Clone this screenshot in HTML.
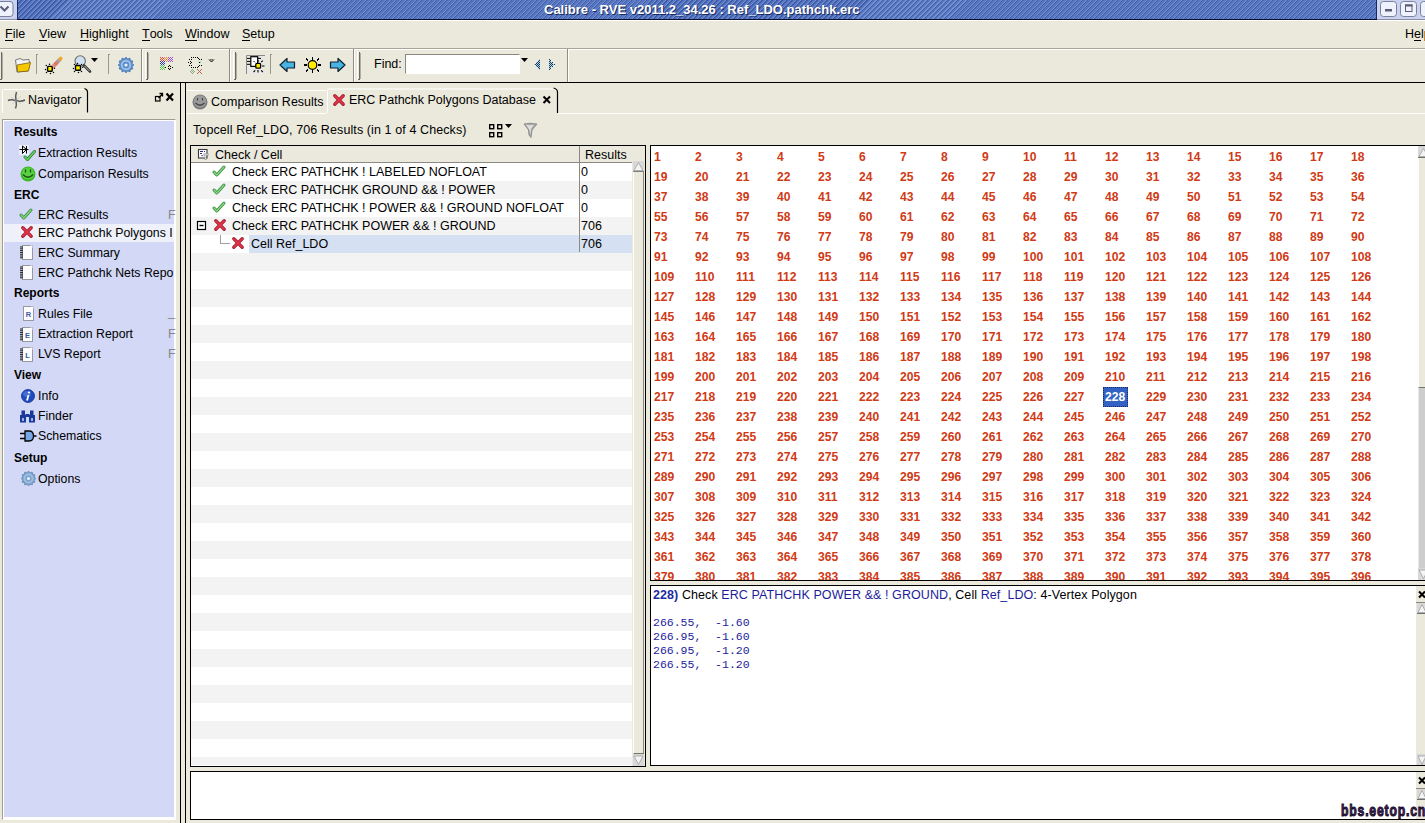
<!DOCTYPE html>
<html><head><meta charset="utf-8"><style>
*{margin:0;padding:0;box-sizing:border-box}
body{width:1425px;height:823px;overflow:hidden;position:relative;background:#ebe9dc;font-family:"Liberation Sans",sans-serif;font-size:12px;color:#000}
.a{position:absolute}
.t{position:absolute;white-space:nowrap;line-height:14px}
u{text-decoration:none;border-bottom:1px solid #000;display:inline-block;line-height:12px}
svg{position:absolute;overflow:visible}
.g{position:absolute;font-weight:bold;color:#d03a14;font-size:12.5px;line-height:14px;white-space:nowrap;transform:scaleX(0.97);transform-origin:0 0}
.nv{position:absolute;white-space:nowrap;line-height:14px;font-size:12.3px}
.hd{position:absolute;white-space:nowrap;line-height:14px;font-size:12px;font-weight:bold}
.mono{position:absolute;white-space:pre;font-family:"Liberation Mono",monospace;font-size:11.5px;line-height:14px;color:#1c1c9c}
</style></head><body>
<div class="a" style="left:0px;top:0px;width:1425px;height:19px;background:repeating-linear-gradient(-45deg,#3f5ca8 0px,#3f5ca8 0.9px,#7390d2 0.9px,#7390d2 1.7px,#5876bf 1.7px,#5876bf 3.54px)"></div>
<div class="a" style="left:0px;top:0px;width:17px;height:19px;background:#c9d3f1"></div>
<div class="a" style="left:1377px;top:0px;width:48px;height:19px;background:#c9d3f1"></div>
<div class="a" style="left:0px;top:19px;width:1425px;height:1px;background:#0a0f2a"></div>
<div class="a" style="left:0px;top:20px;width:1425px;height:1px;background:#fff"></div>
<div class="t" style="left:544px;top:3px;color:#fff;font-weight:bold;font-size:13px;text-shadow:1px 1px 0 #1a2a60">Calibre - RVE v2011.2_34.26 : Ref_LDO.pathchk.erc</div>
<div class="t" style="left:5px;top:27px;font-size:12.5px"><u>F</u>ile</div>
<div class="t" style="left:39px;top:27px;font-size:12.5px"><u>V</u>iew</div>
<div class="t" style="left:80px;top:27px;font-size:12.5px"><u>H</u>ighlight</div>
<div class="t" style="left:142px;top:27px;font-size:12.5px"><u>T</u>ools</div>
<div class="t" style="left:185px;top:27px;font-size:12.5px"><u>W</u>indow</div>
<div class="t" style="left:242px;top:27px;font-size:12.5px"><u>S</u>etup</div>
<div class="t" style="left:1405px;top:27px;font-size:12.5px">H<u>e</u>lp</div>
<div class="a" style="left:0px;top:48px;width:1425px;height:1px;background:#a8a596"></div>
<div class="a" style="left:0px;top:49px;width:1425px;height:1px;background:#fff"></div>
<div class="a" style="left:0px;top:82px;width:1425px;height:1px;background:#000"></div>
<div class="a" style="left:180px;top:83px;width:1px;height:740px;background:#000"></div>
<div class="a" style="left:2px;top:119px;width:174px;height:701px;background:#fff;border:1px solid #a09d90;border-right-color:#fff;border-bottom-color:#fff"></div>
<div class="a" style="left:4px;top:121px;width:170px;height:696px;background:#d2d8f5"></div>
<div class="a" style="left:185px;top:83px;width:1px;height:740px;background:#000"></div>
<div class="a" style="left:190px;top:145px;width:456px;height:622px;background:#fff;border:1px solid #000"></div>
<div class="a" style="left:650px;top:145px;width:775px;height:436px;background:#fff;border:1px solid #000;border-right:none"></div>
<div class="a" style="left:650px;top:585px;width:775px;height:181px;background:#fff;border:1px solid #000;border-right:none"></div>
<div class="a" style="left:190px;top:771px;width:1235px;height:49px;background:#fff;border:1px solid #000;border-right:none"></div>
<svg style="left:0px;top:86px;" width="92" height="28" viewBox="0 0 92 28"><path d="M2.5 27 V4.5 Q2.5 3.5 3.5 3.5 H84" fill="none" stroke="#fff"/><path d="M84.5 2.5 Q87.5 3.5 87.5 6 V26.5" fill="none" stroke="#000" stroke-width="1.2"/></svg>
<div class="t" style="left:28px;top:93px;font-size:12.5px">Navigator</div>
<div class="a" style="left:4px;top:224px;width:170px;height:18px;background:#eef0fa"></div>
<div class="hd" style="left:14px;top:125px;">Results</div>
<div class="nv" style="left:38px;top:146px;">Extraction Results</div>
<div class="nv" style="left:38px;top:167px;">Comparison Results</div>
<div class="hd" style="left:14px;top:188px;">ERC</div>
<div class="nv" style="left:38px;top:208px;">ERC Results</div>
<div class="nv" style="left:38px;top:226px;">ERC Pathchk Polygons I</div>
<div class="nv" style="left:38px;top:246px;">ERC Summary</div>
<div class="nv" style="left:38px;top:266px;">ERC Pathchk Nets Repo</div>
<div class="hd" style="left:14px;top:286px;">Reports</div>
<div class="nv" style="left:38px;top:307px;">Rules File</div>
<div class="nv" style="left:38px;top:327px;">Extraction Report</div>
<div class="nv" style="left:38px;top:347px;">LVS Report</div>
<div class="hd" style="left:14px;top:368px;">View</div>
<div class="nv" style="left:38px;top:389px;">Info</div>
<div class="nv" style="left:38px;top:409px;">Finder</div>
<div class="nv" style="left:38px;top:429px;">Schematics</div>
<div class="hd" style="left:14px;top:451px;">Setup</div>
<div class="nv" style="left:38px;top:472px;">Options</div>
<div class="t" style="left:193px;top:123px;font-size:12.5px;letter-spacing:0.1px">Topcell Ref_LDO, 706 Results (in 1 of 4 Checks)</div>
<div class="a" style="left:191px;top:181px;width:441px;height:18px;background:#f3f3f3"></div>
<div class="a" style="left:191px;top:217px;width:441px;height:18px;background:#f3f3f3"></div>
<div class="a" style="left:191px;top:253px;width:441px;height:18px;background:#f3f3f3"></div>
<div class="a" style="left:191px;top:289px;width:441px;height:18px;background:#f3f3f3"></div>
<div class="a" style="left:191px;top:325px;width:441px;height:18px;background:#f3f3f3"></div>
<div class="a" style="left:191px;top:361px;width:441px;height:18px;background:#f3f3f3"></div>
<div class="a" style="left:191px;top:397px;width:441px;height:18px;background:#f3f3f3"></div>
<div class="a" style="left:191px;top:433px;width:441px;height:18px;background:#f3f3f3"></div>
<div class="a" style="left:191px;top:469px;width:441px;height:18px;background:#f3f3f3"></div>
<div class="a" style="left:191px;top:505px;width:441px;height:18px;background:#f3f3f3"></div>
<div class="a" style="left:191px;top:541px;width:441px;height:18px;background:#f3f3f3"></div>
<div class="a" style="left:191px;top:577px;width:441px;height:18px;background:#f3f3f3"></div>
<div class="a" style="left:191px;top:613px;width:441px;height:18px;background:#f3f3f3"></div>
<div class="a" style="left:191px;top:649px;width:441px;height:18px;background:#f3f3f3"></div>
<div class="a" style="left:191px;top:685px;width:441px;height:18px;background:#f3f3f3"></div>
<div class="a" style="left:191px;top:721px;width:441px;height:18px;background:#f3f3f3"></div>
<div class="a" style="left:191px;top:757px;width:441px;height:8px;background:#f3f3f3"></div>
<div class="a" style="left:249px;top:235px;width:330px;height:18px;background:#d5e0f2"></div>
<div class="a" style="left:579px;top:235px;width:53px;height:18px;background:#d5e0f2"></div>
<div class="a" style="left:191px;top:146px;width:441px;height:16px;background:#ebe8dd"></div>
<div class="a" style="left:191px;top:162px;width:441px;height:1px;background:#8c8a80"></div>
<div class="a" style="left:579px;top:146px;width:1px;height:106px;background:#8c8a80"></div>
<div class="a" style="left:632px;top:146px;width:13px;height:620px;background:#e9e6da"></div>
<div class="t" style="left:215px;top:148px;font-size:12.5px">Check / Cell</div>
<div class="t" style="left:585px;top:148px;font-size:12.5px">Results</div>
<div class="t" style="left:232px;top:165px;font-size:12.5px">Check ERC PATHCHK ! LABELED NOFLOAT</div>
<div class="t" style="left:581px;top:165px;font-size:12.5px">0</div>
<div class="t" style="left:232px;top:183px;font-size:12.5px">Check ERC PATHCHK GROUND &amp;&amp; ! POWER</div>
<div class="t" style="left:581px;top:183px;font-size:12.5px">0</div>
<div class="t" style="left:232px;top:201px;font-size:12.5px">Check ERC PATHCHK ! POWER &amp;&amp; ! GROUND NOFLOAT</div>
<div class="t" style="left:581px;top:201px;font-size:12.5px">0</div>
<div class="t" style="left:232px;top:219px;font-size:12.5px">Check ERC PATHCHK POWER &amp;&amp; ! GROUND</div>
<div class="t" style="left:581px;top:219px;font-size:12.5px">706</div>
<div class="t" style="left:251px;top:237px;font-size:12.5px">Cell Ref_LDO</div>
<div class="t" style="left:581px;top:237px;font-size:12.5px">706</div>
<div class="a" style="left:651px;top:146px;width:767px;height:434px;overflow:hidden">
<div class="a" style="left:452px;top:241px;width:25px;height:20px;background:#3262c4;outline:1px dotted #1a2a60;outline-offset:-1px"></div>
<div class="g" style="left:3px;top:4px">1</div><div class="g" style="left:44px;top:4px">2</div><div class="g" style="left:85px;top:4px">3</div><div class="g" style="left:126px;top:4px">4</div><div class="g" style="left:167px;top:4px">5</div><div class="g" style="left:208px;top:4px">6</div><div class="g" style="left:249px;top:4px">7</div><div class="g" style="left:290px;top:4px">8</div><div class="g" style="left:331px;top:4px">9</div><div class="g" style="left:372px;top:4px">10</div><div class="g" style="left:413px;top:4px">11</div><div class="g" style="left:454px;top:4px">12</div><div class="g" style="left:495px;top:4px">13</div><div class="g" style="left:536px;top:4px">14</div><div class="g" style="left:577px;top:4px">15</div><div class="g" style="left:618px;top:4px">16</div><div class="g" style="left:659px;top:4px">17</div><div class="g" style="left:700px;top:4px">18</div>
<div class="g" style="left:3px;top:24px">19</div><div class="g" style="left:44px;top:24px">20</div><div class="g" style="left:85px;top:24px">21</div><div class="g" style="left:126px;top:24px">22</div><div class="g" style="left:167px;top:24px">23</div><div class="g" style="left:208px;top:24px">24</div><div class="g" style="left:249px;top:24px">25</div><div class="g" style="left:290px;top:24px">26</div><div class="g" style="left:331px;top:24px">27</div><div class="g" style="left:372px;top:24px">28</div><div class="g" style="left:413px;top:24px">29</div><div class="g" style="left:454px;top:24px">30</div><div class="g" style="left:495px;top:24px">31</div><div class="g" style="left:536px;top:24px">32</div><div class="g" style="left:577px;top:24px">33</div><div class="g" style="left:618px;top:24px">34</div><div class="g" style="left:659px;top:24px">35</div><div class="g" style="left:700px;top:24px">36</div>
<div class="g" style="left:3px;top:44px">37</div><div class="g" style="left:44px;top:44px">38</div><div class="g" style="left:85px;top:44px">39</div><div class="g" style="left:126px;top:44px">40</div><div class="g" style="left:167px;top:44px">41</div><div class="g" style="left:208px;top:44px">42</div><div class="g" style="left:249px;top:44px">43</div><div class="g" style="left:290px;top:44px">44</div><div class="g" style="left:331px;top:44px">45</div><div class="g" style="left:372px;top:44px">46</div><div class="g" style="left:413px;top:44px">47</div><div class="g" style="left:454px;top:44px">48</div><div class="g" style="left:495px;top:44px">49</div><div class="g" style="left:536px;top:44px">50</div><div class="g" style="left:577px;top:44px">51</div><div class="g" style="left:618px;top:44px">52</div><div class="g" style="left:659px;top:44px">53</div><div class="g" style="left:700px;top:44px">54</div>
<div class="g" style="left:3px;top:64px">55</div><div class="g" style="left:44px;top:64px">56</div><div class="g" style="left:85px;top:64px">57</div><div class="g" style="left:126px;top:64px">58</div><div class="g" style="left:167px;top:64px">59</div><div class="g" style="left:208px;top:64px">60</div><div class="g" style="left:249px;top:64px">61</div><div class="g" style="left:290px;top:64px">62</div><div class="g" style="left:331px;top:64px">63</div><div class="g" style="left:372px;top:64px">64</div><div class="g" style="left:413px;top:64px">65</div><div class="g" style="left:454px;top:64px">66</div><div class="g" style="left:495px;top:64px">67</div><div class="g" style="left:536px;top:64px">68</div><div class="g" style="left:577px;top:64px">69</div><div class="g" style="left:618px;top:64px">70</div><div class="g" style="left:659px;top:64px">71</div><div class="g" style="left:700px;top:64px">72</div>
<div class="g" style="left:3px;top:84px">73</div><div class="g" style="left:44px;top:84px">74</div><div class="g" style="left:85px;top:84px">75</div><div class="g" style="left:126px;top:84px">76</div><div class="g" style="left:167px;top:84px">77</div><div class="g" style="left:208px;top:84px">78</div><div class="g" style="left:249px;top:84px">79</div><div class="g" style="left:290px;top:84px">80</div><div class="g" style="left:331px;top:84px">81</div><div class="g" style="left:372px;top:84px">82</div><div class="g" style="left:413px;top:84px">83</div><div class="g" style="left:454px;top:84px">84</div><div class="g" style="left:495px;top:84px">85</div><div class="g" style="left:536px;top:84px">86</div><div class="g" style="left:577px;top:84px">87</div><div class="g" style="left:618px;top:84px">88</div><div class="g" style="left:659px;top:84px">89</div><div class="g" style="left:700px;top:84px">90</div>
<div class="g" style="left:3px;top:104px">91</div><div class="g" style="left:44px;top:104px">92</div><div class="g" style="left:85px;top:104px">93</div><div class="g" style="left:126px;top:104px">94</div><div class="g" style="left:167px;top:104px">95</div><div class="g" style="left:208px;top:104px">96</div><div class="g" style="left:249px;top:104px">97</div><div class="g" style="left:290px;top:104px">98</div><div class="g" style="left:331px;top:104px">99</div><div class="g" style="left:372px;top:104px">100</div><div class="g" style="left:413px;top:104px">101</div><div class="g" style="left:454px;top:104px">102</div><div class="g" style="left:495px;top:104px">103</div><div class="g" style="left:536px;top:104px">104</div><div class="g" style="left:577px;top:104px">105</div><div class="g" style="left:618px;top:104px">106</div><div class="g" style="left:659px;top:104px">107</div><div class="g" style="left:700px;top:104px">108</div>
<div class="g" style="left:3px;top:124px">109</div><div class="g" style="left:44px;top:124px">110</div><div class="g" style="left:85px;top:124px">111</div><div class="g" style="left:126px;top:124px">112</div><div class="g" style="left:167px;top:124px">113</div><div class="g" style="left:208px;top:124px">114</div><div class="g" style="left:249px;top:124px">115</div><div class="g" style="left:290px;top:124px">116</div><div class="g" style="left:331px;top:124px">117</div><div class="g" style="left:372px;top:124px">118</div><div class="g" style="left:413px;top:124px">119</div><div class="g" style="left:454px;top:124px">120</div><div class="g" style="left:495px;top:124px">121</div><div class="g" style="left:536px;top:124px">122</div><div class="g" style="left:577px;top:124px">123</div><div class="g" style="left:618px;top:124px">124</div><div class="g" style="left:659px;top:124px">125</div><div class="g" style="left:700px;top:124px">126</div>
<div class="g" style="left:3px;top:144px">127</div><div class="g" style="left:44px;top:144px">128</div><div class="g" style="left:85px;top:144px">129</div><div class="g" style="left:126px;top:144px">130</div><div class="g" style="left:167px;top:144px">131</div><div class="g" style="left:208px;top:144px">132</div><div class="g" style="left:249px;top:144px">133</div><div class="g" style="left:290px;top:144px">134</div><div class="g" style="left:331px;top:144px">135</div><div class="g" style="left:372px;top:144px">136</div><div class="g" style="left:413px;top:144px">137</div><div class="g" style="left:454px;top:144px">138</div><div class="g" style="left:495px;top:144px">139</div><div class="g" style="left:536px;top:144px">140</div><div class="g" style="left:577px;top:144px">141</div><div class="g" style="left:618px;top:144px">142</div><div class="g" style="left:659px;top:144px">143</div><div class="g" style="left:700px;top:144px">144</div>
<div class="g" style="left:3px;top:164px">145</div><div class="g" style="left:44px;top:164px">146</div><div class="g" style="left:85px;top:164px">147</div><div class="g" style="left:126px;top:164px">148</div><div class="g" style="left:167px;top:164px">149</div><div class="g" style="left:208px;top:164px">150</div><div class="g" style="left:249px;top:164px">151</div><div class="g" style="left:290px;top:164px">152</div><div class="g" style="left:331px;top:164px">153</div><div class="g" style="left:372px;top:164px">154</div><div class="g" style="left:413px;top:164px">155</div><div class="g" style="left:454px;top:164px">156</div><div class="g" style="left:495px;top:164px">157</div><div class="g" style="left:536px;top:164px">158</div><div class="g" style="left:577px;top:164px">159</div><div class="g" style="left:618px;top:164px">160</div><div class="g" style="left:659px;top:164px">161</div><div class="g" style="left:700px;top:164px">162</div>
<div class="g" style="left:3px;top:184px">163</div><div class="g" style="left:44px;top:184px">164</div><div class="g" style="left:85px;top:184px">165</div><div class="g" style="left:126px;top:184px">166</div><div class="g" style="left:167px;top:184px">167</div><div class="g" style="left:208px;top:184px">168</div><div class="g" style="left:249px;top:184px">169</div><div class="g" style="left:290px;top:184px">170</div><div class="g" style="left:331px;top:184px">171</div><div class="g" style="left:372px;top:184px">172</div><div class="g" style="left:413px;top:184px">173</div><div class="g" style="left:454px;top:184px">174</div><div class="g" style="left:495px;top:184px">175</div><div class="g" style="left:536px;top:184px">176</div><div class="g" style="left:577px;top:184px">177</div><div class="g" style="left:618px;top:184px">178</div><div class="g" style="left:659px;top:184px">179</div><div class="g" style="left:700px;top:184px">180</div>
<div class="g" style="left:3px;top:204px">181</div><div class="g" style="left:44px;top:204px">182</div><div class="g" style="left:85px;top:204px">183</div><div class="g" style="left:126px;top:204px">184</div><div class="g" style="left:167px;top:204px">185</div><div class="g" style="left:208px;top:204px">186</div><div class="g" style="left:249px;top:204px">187</div><div class="g" style="left:290px;top:204px">188</div><div class="g" style="left:331px;top:204px">189</div><div class="g" style="left:372px;top:204px">190</div><div class="g" style="left:413px;top:204px">191</div><div class="g" style="left:454px;top:204px">192</div><div class="g" style="left:495px;top:204px">193</div><div class="g" style="left:536px;top:204px">194</div><div class="g" style="left:577px;top:204px">195</div><div class="g" style="left:618px;top:204px">196</div><div class="g" style="left:659px;top:204px">197</div><div class="g" style="left:700px;top:204px">198</div>
<div class="g" style="left:3px;top:224px">199</div><div class="g" style="left:44px;top:224px">200</div><div class="g" style="left:85px;top:224px">201</div><div class="g" style="left:126px;top:224px">202</div><div class="g" style="left:167px;top:224px">203</div><div class="g" style="left:208px;top:224px">204</div><div class="g" style="left:249px;top:224px">205</div><div class="g" style="left:290px;top:224px">206</div><div class="g" style="left:331px;top:224px">207</div><div class="g" style="left:372px;top:224px">208</div><div class="g" style="left:413px;top:224px">209</div><div class="g" style="left:454px;top:224px">210</div><div class="g" style="left:495px;top:224px">211</div><div class="g" style="left:536px;top:224px">212</div><div class="g" style="left:577px;top:224px">213</div><div class="g" style="left:618px;top:224px">214</div><div class="g" style="left:659px;top:224px">215</div><div class="g" style="left:700px;top:224px">216</div>
<div class="g" style="left:3px;top:244px">217</div><div class="g" style="left:44px;top:244px">218</div><div class="g" style="left:85px;top:244px">219</div><div class="g" style="left:126px;top:244px">220</div><div class="g" style="left:167px;top:244px">221</div><div class="g" style="left:208px;top:244px">222</div><div class="g" style="left:249px;top:244px">223</div><div class="g" style="left:290px;top:244px">224</div><div class="g" style="left:331px;top:244px">225</div><div class="g" style="left:372px;top:244px">226</div><div class="g" style="left:413px;top:244px">227</div><div class="g" style="left:454px;top:244px;color:#fff">228</div><div class="g" style="left:495px;top:244px">229</div><div class="g" style="left:536px;top:244px">230</div><div class="g" style="left:577px;top:244px">231</div><div class="g" style="left:618px;top:244px">232</div><div class="g" style="left:659px;top:244px">233</div><div class="g" style="left:700px;top:244px">234</div>
<div class="g" style="left:3px;top:264px">235</div><div class="g" style="left:44px;top:264px">236</div><div class="g" style="left:85px;top:264px">237</div><div class="g" style="left:126px;top:264px">238</div><div class="g" style="left:167px;top:264px">239</div><div class="g" style="left:208px;top:264px">240</div><div class="g" style="left:249px;top:264px">241</div><div class="g" style="left:290px;top:264px">242</div><div class="g" style="left:331px;top:264px">243</div><div class="g" style="left:372px;top:264px">244</div><div class="g" style="left:413px;top:264px">245</div><div class="g" style="left:454px;top:264px">246</div><div class="g" style="left:495px;top:264px">247</div><div class="g" style="left:536px;top:264px">248</div><div class="g" style="left:577px;top:264px">249</div><div class="g" style="left:618px;top:264px">250</div><div class="g" style="left:659px;top:264px">251</div><div class="g" style="left:700px;top:264px">252</div>
<div class="g" style="left:3px;top:284px">253</div><div class="g" style="left:44px;top:284px">254</div><div class="g" style="left:85px;top:284px">255</div><div class="g" style="left:126px;top:284px">256</div><div class="g" style="left:167px;top:284px">257</div><div class="g" style="left:208px;top:284px">258</div><div class="g" style="left:249px;top:284px">259</div><div class="g" style="left:290px;top:284px">260</div><div class="g" style="left:331px;top:284px">261</div><div class="g" style="left:372px;top:284px">262</div><div class="g" style="left:413px;top:284px">263</div><div class="g" style="left:454px;top:284px">264</div><div class="g" style="left:495px;top:284px">265</div><div class="g" style="left:536px;top:284px">266</div><div class="g" style="left:577px;top:284px">267</div><div class="g" style="left:618px;top:284px">268</div><div class="g" style="left:659px;top:284px">269</div><div class="g" style="left:700px;top:284px">270</div>
<div class="g" style="left:3px;top:304px">271</div><div class="g" style="left:44px;top:304px">272</div><div class="g" style="left:85px;top:304px">273</div><div class="g" style="left:126px;top:304px">274</div><div class="g" style="left:167px;top:304px">275</div><div class="g" style="left:208px;top:304px">276</div><div class="g" style="left:249px;top:304px">277</div><div class="g" style="left:290px;top:304px">278</div><div class="g" style="left:331px;top:304px">279</div><div class="g" style="left:372px;top:304px">280</div><div class="g" style="left:413px;top:304px">281</div><div class="g" style="left:454px;top:304px">282</div><div class="g" style="left:495px;top:304px">283</div><div class="g" style="left:536px;top:304px">284</div><div class="g" style="left:577px;top:304px">285</div><div class="g" style="left:618px;top:304px">286</div><div class="g" style="left:659px;top:304px">287</div><div class="g" style="left:700px;top:304px">288</div>
<div class="g" style="left:3px;top:324px">289</div><div class="g" style="left:44px;top:324px">290</div><div class="g" style="left:85px;top:324px">291</div><div class="g" style="left:126px;top:324px">292</div><div class="g" style="left:167px;top:324px">293</div><div class="g" style="left:208px;top:324px">294</div><div class="g" style="left:249px;top:324px">295</div><div class="g" style="left:290px;top:324px">296</div><div class="g" style="left:331px;top:324px">297</div><div class="g" style="left:372px;top:324px">298</div><div class="g" style="left:413px;top:324px">299</div><div class="g" style="left:454px;top:324px">300</div><div class="g" style="left:495px;top:324px">301</div><div class="g" style="left:536px;top:324px">302</div><div class="g" style="left:577px;top:324px">303</div><div class="g" style="left:618px;top:324px">304</div><div class="g" style="left:659px;top:324px">305</div><div class="g" style="left:700px;top:324px">306</div>
<div class="g" style="left:3px;top:344px">307</div><div class="g" style="left:44px;top:344px">308</div><div class="g" style="left:85px;top:344px">309</div><div class="g" style="left:126px;top:344px">310</div><div class="g" style="left:167px;top:344px">311</div><div class="g" style="left:208px;top:344px">312</div><div class="g" style="left:249px;top:344px">313</div><div class="g" style="left:290px;top:344px">314</div><div class="g" style="left:331px;top:344px">315</div><div class="g" style="left:372px;top:344px">316</div><div class="g" style="left:413px;top:344px">317</div><div class="g" style="left:454px;top:344px">318</div><div class="g" style="left:495px;top:344px">319</div><div class="g" style="left:536px;top:344px">320</div><div class="g" style="left:577px;top:344px">321</div><div class="g" style="left:618px;top:344px">322</div><div class="g" style="left:659px;top:344px">323</div><div class="g" style="left:700px;top:344px">324</div>
<div class="g" style="left:3px;top:364px">325</div><div class="g" style="left:44px;top:364px">326</div><div class="g" style="left:85px;top:364px">327</div><div class="g" style="left:126px;top:364px">328</div><div class="g" style="left:167px;top:364px">329</div><div class="g" style="left:208px;top:364px">330</div><div class="g" style="left:249px;top:364px">331</div><div class="g" style="left:290px;top:364px">332</div><div class="g" style="left:331px;top:364px">333</div><div class="g" style="left:372px;top:364px">334</div><div class="g" style="left:413px;top:364px">335</div><div class="g" style="left:454px;top:364px">336</div><div class="g" style="left:495px;top:364px">337</div><div class="g" style="left:536px;top:364px">338</div><div class="g" style="left:577px;top:364px">339</div><div class="g" style="left:618px;top:364px">340</div><div class="g" style="left:659px;top:364px">341</div><div class="g" style="left:700px;top:364px">342</div>
<div class="g" style="left:3px;top:384px">343</div><div class="g" style="left:44px;top:384px">344</div><div class="g" style="left:85px;top:384px">345</div><div class="g" style="left:126px;top:384px">346</div><div class="g" style="left:167px;top:384px">347</div><div class="g" style="left:208px;top:384px">348</div><div class="g" style="left:249px;top:384px">349</div><div class="g" style="left:290px;top:384px">350</div><div class="g" style="left:331px;top:384px">351</div><div class="g" style="left:372px;top:384px">352</div><div class="g" style="left:413px;top:384px">353</div><div class="g" style="left:454px;top:384px">354</div><div class="g" style="left:495px;top:384px">355</div><div class="g" style="left:536px;top:384px">356</div><div class="g" style="left:577px;top:384px">357</div><div class="g" style="left:618px;top:384px">358</div><div class="g" style="left:659px;top:384px">359</div><div class="g" style="left:700px;top:384px">360</div>
<div class="g" style="left:3px;top:404px">361</div><div class="g" style="left:44px;top:404px">362</div><div class="g" style="left:85px;top:404px">363</div><div class="g" style="left:126px;top:404px">364</div><div class="g" style="left:167px;top:404px">365</div><div class="g" style="left:208px;top:404px">366</div><div class="g" style="left:249px;top:404px">367</div><div class="g" style="left:290px;top:404px">368</div><div class="g" style="left:331px;top:404px">369</div><div class="g" style="left:372px;top:404px">370</div><div class="g" style="left:413px;top:404px">371</div><div class="g" style="left:454px;top:404px">372</div><div class="g" style="left:495px;top:404px">373</div><div class="g" style="left:536px;top:404px">374</div><div class="g" style="left:577px;top:404px">375</div><div class="g" style="left:618px;top:404px">376</div><div class="g" style="left:659px;top:404px">377</div><div class="g" style="left:700px;top:404px">378</div>
<div class="g" style="left:3px;top:424px">379</div><div class="g" style="left:44px;top:424px">380</div><div class="g" style="left:85px;top:424px">381</div><div class="g" style="left:126px;top:424px">382</div><div class="g" style="left:167px;top:424px">383</div><div class="g" style="left:208px;top:424px">384</div><div class="g" style="left:249px;top:424px">385</div><div class="g" style="left:290px;top:424px">386</div><div class="g" style="left:331px;top:424px">387</div><div class="g" style="left:372px;top:424px">388</div><div class="g" style="left:413px;top:424px">389</div><div class="g" style="left:454px;top:424px">390</div><div class="g" style="left:495px;top:424px">391</div><div class="g" style="left:536px;top:424px">392</div><div class="g" style="left:577px;top:424px">393</div><div class="g" style="left:618px;top:424px">394</div><div class="g" style="left:659px;top:424px">395</div><div class="g" style="left:700px;top:424px">396</div>
</div>
<div class="a" style="left:1418px;top:146px;width:7px;height:434px;background:#ebe9dc"></div>
<div class="t" style="left:653px;top:588px;font-size:12.5px;letter-spacing:0.08px"><b style="color:#1c2ca0">228)</b>&nbsp;Check <span style="color:#1c1c9c">ERC PATHCHK POWER &amp;&amp; ! GROUND</span>, Cell <span style="color:#1c1c9c">Ref_LDO</span>: 4-Vertex Polygon</div>
<div class="mono" style="left:653px;top:616px">266.55,  -1.60
266.95,  -1.60
266.95,  -1.20
266.55,  -1.20</div>
<div class="a" style="left:17px;top:0px;width:1px;height:19px;background:#1a2a60"></div>
<div class="a" style="left:0px;top:19px;width:17px;height:1px;background:#8a8da0"></div>
<svg style="left:0px;top:0px;" width="17" height="19" viewBox="0 0 17 19"><rect x="-3" y="1.5" width="16" height="15" rx="3" fill="#eef2fc" stroke="#7d8096"/><path d="M0.5 6.5 L4.5 10.5 L8.5 6.5" fill="none" stroke="#5a5d74" stroke-width="2"/></svg>
<div class="a" style="left:1376px;top:0px;width:1px;height:19px;background:#1a2a60"></div>
<div class="a" style="left:1377px;top:19px;width:48px;height:1px;background:#8a8da0"></div>
<svg style="left:1377px;top:0px;" width="48" height="19" viewBox="0 0 48 19"><rect x="3.5" y="1.5" width="16" height="15" rx="3" fill="#eef2fc" stroke="#7d8096"/><rect x="8" y="9" width="7" height="2.5" fill="#5a5d74"/><rect x="23.5" y="1.5" width="16" height="15" rx="3" fill="#eef2fc" stroke="#7d8096"/><rect x="28.5" y="5" width="6.5" height="6.5" fill="none" stroke="#5a5d74" stroke-width="1"/><rect x="28" y="4.5" width="7.5" height="2" fill="#5a5d74"/><rect x="43.5" y="1.5" width="16" height="15" rx="3" fill="#eef2fc" stroke="#7d8096"/></svg>
<div class="a" style="left:141px;top:49px;width:1px;height:33px;background:#8f8d80"></div>
<div class="a" style="left:142px;top:49px;width:1px;height:33px;background:#fff"></div>
<div class="a" style="left:229px;top:49px;width:1px;height:33px;background:#8f8d80"></div>
<div class="a" style="left:230px;top:49px;width:1px;height:33px;background:#fff"></div>
<div class="a" style="left:353px;top:49px;width:1px;height:33px;background:#8f8d80"></div>
<div class="a" style="left:354px;top:49px;width:1px;height:33px;background:#fff"></div>
<div class="a" style="left:567px;top:49px;width:1px;height:33px;background:#8f8d80"></div>
<div class="a" style="left:568px;top:49px;width:1px;height:33px;background:#fff"></div>
<div class="a" style="left:-1px;top:51px;width:1px;height:29px;background:#fff"></div>
<div class="a" style="left:1px;top:52px;width:1px;height:28px;background:#6e6c62"></div>
<div class="a" style="left:2px;top:53px;width:1px;height:26px;background:#b0aea2"></div>
<div class="a" style="left:0px;top:79px;width:2px;height:1px;background:#6e6c62"></div>
<div class="a" style="left:145px;top:51px;width:1px;height:29px;background:#fff"></div>
<div class="a" style="left:147px;top:52px;width:1px;height:28px;background:#6e6c62"></div>
<div class="a" style="left:148px;top:53px;width:1px;height:26px;background:#b0aea2"></div>
<div class="a" style="left:146px;top:79px;width:2px;height:1px;background:#6e6c62"></div>
<div class="a" style="left:233px;top:51px;width:1px;height:29px;background:#fff"></div>
<div class="a" style="left:235px;top:52px;width:1px;height:28px;background:#6e6c62"></div>
<div class="a" style="left:236px;top:53px;width:1px;height:26px;background:#b0aea2"></div>
<div class="a" style="left:234px;top:79px;width:2px;height:1px;background:#6e6c62"></div>
<div class="a" style="left:357px;top:51px;width:1px;height:29px;background:#fff"></div>
<div class="a" style="left:359px;top:52px;width:1px;height:28px;background:#6e6c62"></div>
<div class="a" style="left:360px;top:53px;width:1px;height:26px;background:#b0aea2"></div>
<div class="a" style="left:358px;top:79px;width:2px;height:1px;background:#6e6c62"></div>
<div class="a" style="left:36px;top:54px;width:1px;height:20px;background:#9a988c"></div>
<div class="a" style="left:36px;top:54px;width:2px;height:1px;background:#9a988c"></div>
<div class="a" style="left:108px;top:54px;width:1px;height:20px;background:#9a988c"></div>
<div class="a" style="left:108px;top:54px;width:2px;height:1px;background:#9a988c"></div>
<div class="a" style="left:270px;top:54px;width:1px;height:20px;background:#9a988c"></div>
<div class="a" style="left:270px;top:54px;width:2px;height:1px;background:#9a988c"></div>
<svg style="left:14px;top:57px;" width="18" height="16" viewBox="0 0 18 16"><path d="M1.5 3 L6 1.5 L9 3 L15 2.5 L15.5 6 L14 14 L3 15 Z" fill="#f4f4f4" stroke="#5a5a6a" stroke-width="0.8"/><path d="M3 8 L16.5 5.5 L14.5 14 L3.5 15 Z" fill="#f5c800" stroke="#7a6010" stroke-width="0.8"/></svg>
<svg style="left:43px;top:55px;" width="22" height="20" viewBox="0 0 22 20"><defs><linearGradient id="pg" x1="0" y1="1" x2="1" y2="0"><stop offset="0" stop-color="#f08070" stop-opacity="0.3"/><stop offset="0.45" stop-color="#e07060"/><stop offset="0.7" stop-color="#a8a8a8"/><stop offset="0.78" stop-color="#f0a030"/><stop offset="1" stop-color="#f8b838"/></linearGradient></defs><path d="M7 12 L16 2.5 Q18.5 0.5 19.5 2.5 Q20 4 18.5 5.5 L10 14.5 Z" fill="url(#pg)"/><rect x="4.6" y="11.4" width="4.6" height="4.8" rx="0.8" fill="#ffee00" stroke="#000" stroke-width="1.4"/><g fill="#000"><circle cx="3.3" cy="10.4" r="0.75"/><circle cx="6.5" cy="9.3" r="0.75"/><circle cx="11.5" cy="13.3" r="0.75"/><circle cx="2.5" cy="14.4" r="0.75"/><circle cx="3.5" cy="17.5" r="0.75"/><circle cx="7.5" cy="18.4" r="0.75"/><circle cx="10.5" cy="17.5" r="0.75"/></g></svg>
<svg style="left:72px;top:55px;" width="28" height="20" viewBox="0 0 28 20"><circle cx="8.2" cy="6" r="5.2" fill="#cfe0f2" stroke="#6a6a6a" stroke-width="1.1"/><path d="M12 10.5 L18 16.5" stroke="#333" stroke-width="2.6" stroke-linecap="round"/><path d="M12.3 10.8 L17.7 16.2" stroke="#c8c8c8" stroke-width="0.9"/><rect x="3.5" y="10.5" width="5" height="4.8" rx="0.8" fill="#ffee00" stroke="#000" stroke-width="1.4"/><g fill="#000"><circle cx="2.5" cy="9.5" r="0.75"/><circle cx="5.5" cy="8.5" r="0.75"/><circle cx="9.5" cy="9.5" r="0.75"/><circle cx="1.5" cy="13.5" r="0.75"/><circle cx="2.5" cy="16.5" r="0.75"/><circle cx="6.5" cy="17.5" r="0.75"/><circle cx="9.5" cy="16.5" r="0.75"/><circle cx="10.7" cy="12.3" r="0.75"/></g><path d="M19 3 L26 3 L22.5 7 Z" fill="#000"/></svg>
<svg style="left:118px;top:57px;" width="16" height="16" viewBox="0 0 16 16"><polygon points="16.00,8.00 14.03,9.62 14.93,12.00 12.41,12.41 12.00,14.93 9.62,14.03 8.00,16.00 6.38,14.03 4.00,14.93 3.59,12.41 1.07,12.00 1.97,9.62 0.00,8.00 1.97,6.38 1.07,4.00 3.59,3.59 4.00,1.07 6.38,1.97 8.00,0.00 9.62,1.97 12.00,1.07 12.41,3.59 14.93,4.00 14.03,6.38" fill="#5b8ec9" stroke="#3a6aa8" stroke-width="0.6"/><circle cx="8.0" cy="8.0" r="4.32" fill="none" stroke="#9cc0e8" stroke-width="1.92"/><circle cx="8.0" cy="8.0" r="1.6" fill="#e8f0fa"/></svg>
<svg style="left:160px;top:57px;" width="14" height="14" viewBox="0 0 14 14"><g shape-rendering="crispEdges"><rect x="0" y="0" width="1" height="1" fill="#e04838"/><rect x="0" y="2" width="1" height="1" fill="#e04838"/><rect x="0" y="4" width="1" height="1" fill="#e04838"/><rect x="1" y="1" width="1" height="1" fill="#e04838"/><rect x="1" y="3" width="1" height="1" fill="#e04838"/><rect x="2" y="0" width="1" height="1" fill="#e04838"/><rect x="2" y="2" width="1" height="1" fill="#e04838"/><rect x="2" y="4" width="1" height="1" fill="#e04838"/><rect x="3" y="1" width="1" height="1" fill="#e04838"/><rect x="3" y="3" width="1" height="1" fill="#e04838"/><rect x="4" y="0" width="1" height="1" fill="#e04838"/><rect x="4" y="2" width="1" height="1" fill="#e04838"/><rect x="4" y="4" width="1" height="1" fill="#e04838"/><rect x="4" y="0" width="1" height="1" fill="#f08848"/><rect x="4" y="2" width="1" height="1" fill="#f08848"/><rect x="4" y="4" width="1" height="1" fill="#f08848"/><rect x="5" y="1" width="1" height="1" fill="#f08848"/><rect x="5" y="3" width="1" height="1" fill="#f08848"/><rect x="6" y="0" width="1" height="1" fill="#f08848"/><rect x="6" y="2" width="1" height="1" fill="#f08848"/><rect x="6" y="4" width="1" height="1" fill="#f08848"/><rect x="7" y="1" width="1" height="1" fill="#f08848"/><rect x="7" y="3" width="1" height="1" fill="#f08848"/><rect x="8" y="0" width="1" height="1" fill="#f08848"/><rect x="8" y="2" width="1" height="1" fill="#f08848"/><rect x="8" y="4" width="1" height="1" fill="#f08848"/><rect x="8" y="0" width="1" height="1" fill="#a050c8"/><rect x="8" y="2" width="1" height="1" fill="#a050c8"/><rect x="8" y="4" width="1" height="1" fill="#a050c8"/><rect x="9" y="1" width="1" height="1" fill="#a050c8"/><rect x="9" y="3" width="1" height="1" fill="#a050c8"/><rect x="10" y="0" width="1" height="1" fill="#a050c8"/><rect x="10" y="2" width="1" height="1" fill="#a050c8"/><rect x="10" y="4" width="1" height="1" fill="#a050c8"/><rect x="11" y="1" width="1" height="1" fill="#a050c8"/><rect x="11" y="3" width="1" height="1" fill="#a050c8"/><rect x="12" y="0" width="1" height="1" fill="#a050c8"/><rect x="12" y="2" width="1" height="1" fill="#a050c8"/><rect x="12" y="4" width="1" height="1" fill="#a050c8"/><rect x="0" y="4" width="1" height="1" fill="#2838b0"/><rect x="0" y="6" width="1" height="1" fill="#2838b0"/><rect x="0" y="8" width="1" height="1" fill="#2838b0"/><rect x="1" y="5" width="1" height="1" fill="#2838b0"/><rect x="1" y="7" width="1" height="1" fill="#2838b0"/><rect x="2" y="4" width="1" height="1" fill="#2838b0"/><rect x="2" y="6" width="1" height="1" fill="#2838b0"/><rect x="2" y="8" width="1" height="1" fill="#2838b0"/><rect x="3" y="5" width="1" height="1" fill="#2838b0"/><rect x="3" y="7" width="1" height="1" fill="#2838b0"/><rect x="4" y="4" width="1" height="1" fill="#2838b0"/><rect x="4" y="6" width="1" height="1" fill="#2838b0"/><rect x="4" y="8" width="1" height="1" fill="#2838b0"/><rect x="0" y="8" width="1" height="1" fill="#58c858"/><rect x="0" y="10" width="1" height="1" fill="#58c858"/><rect x="0" y="12" width="1" height="1" fill="#58c858"/><rect x="1" y="9" width="1" height="1" fill="#58c858"/><rect x="1" y="11" width="1" height="1" fill="#58c858"/><rect x="2" y="8" width="1" height="1" fill="#58c858"/><rect x="2" y="10" width="1" height="1" fill="#58c858"/><rect x="2" y="12" width="1" height="1" fill="#58c858"/><rect x="3" y="9" width="1" height="1" fill="#58c858"/><rect x="3" y="11" width="1" height="1" fill="#58c858"/><rect x="4" y="8" width="1" height="1" fill="#58c858"/><rect x="4" y="10" width="1" height="1" fill="#58c858"/><rect x="4" y="12" width="1" height="1" fill="#58c858"/><rect x="5" y="10" width="1" height="1" fill="#000"/><rect x="9" y="8" width="1" height="1" fill="#000"/><rect x="10" y="9" width="1" height="1" fill="#000"/><rect x="8" y="9" width="1" height="1" fill="#000"/><rect x="8" y="11" width="1" height="1" fill="#000"/><rect x="10" y="11" width="1" height="1" fill="#000"/><rect x="9" y="12" width="1" height="1" fill="#000"/><rect x="12" y="10" width="1" height="1" fill="#000"/><rect x="9" y="10" width="1" height="1" fill="#f0e898"/><rect x="9" y="9" width="1" height="1" fill="#f0e898"/><rect x="9" y="11" width="1" height="1" fill="#f0e898"/></g></svg>
<svg style="left:187px;top:56px;" width="16" height="19" viewBox="0 0 16 19"><g shape-rendering="crispEdges"><rect x="4" y="1" width="1" height="1" fill="#000"/><rect x="6" y="1" width="1" height="1" fill="#000"/><rect x="8" y="1" width="1" height="1" fill="#000"/><rect x="10" y="1" width="1" height="1" fill="#000"/><rect x="11" y="2" width="1" height="1" fill="#000"/><rect x="12" y="3" width="1" height="1" fill="#000"/><rect x="14" y="3" width="1" height="1" fill="#000"/><rect x="2" y="3" width="1" height="1" fill="#000"/><rect x="4" y="3" width="1" height="1" fill="#000"/><rect x="1" y="6" width="1" height="1" fill="#000"/><rect x="3" y="5" width="1" height="1" fill="#000"/><rect x="4" y="6" width="1" height="1" fill="#000"/><rect x="3" y="7" width="1" height="1" fill="#000"/><rect x="2" y="9" width="1" height="1" fill="#000"/><rect x="4" y="9" width="1" height="1" fill="#000"/><rect x="4" y="11" width="1" height="1" fill="#000"/><rect x="6" y="11" width="1" height="1" fill="#000"/><rect x="8" y="11" width="1" height="1" fill="#000"/><rect x="10" y="11" width="1" height="1" fill="#000"/><rect x="11" y="10" width="1" height="1" fill="#000"/><rect x="12" y="9" width="1" height="1" fill="#000"/><rect x="14" y="9" width="1" height="1" fill="#000"/><rect x="12" y="6" width="1" height="1" fill="#000"/><rect x="13" y="6" width="1" height="1" fill="#90d890"/><rect x="11" y="5" width="1" height="1" fill="#b0e0b0"/><rect x="13" y="5" width="1" height="1" fill="#b0e0b0"/><rect x="4" y="14" width="1" height="1" fill="#78b078"/><rect x="5" y="13" width="1" height="1" fill="#78b078"/><rect x="6" y="14" width="1" height="1" fill="#78b078"/><rect x="5" y="15" width="1" height="1" fill="#78b078"/><rect x="4" y="16" width="1" height="1" fill="#78b078"/><rect x="6" y="16" width="1" height="1" fill="#78b078"/><rect x="5" y="17" width="1" height="1" fill="#78b078"/><rect x="7" y="15" width="1" height="1" fill="#78b078"/><rect x="3" y="15" width="1" height="1" fill="#78b078"/><rect x="10" y="13" width="1" height="1" fill="#b06850"/><rect x="11" y="14" width="1" height="1" fill="#b06850"/><rect x="12" y="15" width="1" height="1" fill="#b06850"/><rect x="13" y="16" width="1" height="1" fill="#b06850"/><rect x="14" y="17" width="1" height="1" fill="#b06850"/><rect x="14" y="13" width="1" height="1" fill="#b06850"/><rect x="13" y="14" width="1" height="1" fill="#b06850"/><rect x="11" y="16" width="1" height="1" fill="#b06850"/><rect x="10" y="17" width="1" height="1" fill="#b06850"/></g></svg>
<svg style="left:208px;top:58px;" width="8" height="6" viewBox="0 0 8 6"><path d="M1 1.5 L3.5 4 L6 1.5 M2.5 1.2 L3.5 2.2 L4.5 1.2" fill="none" stroke="#000" stroke-width="1"/></svg>
<svg style="left:246px;top:55px;" width="20" height="20" viewBox="0 0 20 20"><rect x="0" y="0" width="19" height="19" fill="#e9e8e4"/><path d="M0.5 19 V0.5 H19" fill="none" stroke="#8a8a84"/><rect x="4.8" y="1.7" width="6.9" height="9.7" fill="#fff" stroke="#000" stroke-width="1.2"/><path d="M1 3.4 H4.5 M1 6.4 H4.5 M1 9.3 H4.5 M12 3.4 H15" stroke="#000" stroke-width="1"/><path d="M7.5 6 L8.8 7.3" stroke="#000" stroke-width="1"/><rect x="9.8" y="8.4" width="4.8" height="4.8" rx="1" fill="#ffee00" stroke="#000" stroke-width="1.3"/><g stroke="#000" stroke-width="1.1"><path d="M12 5 V7 M16 11 H18.5 M12 15 V17.5 M16.8 5.6 L15.2 7.2 M7.6 17 L9.2 15.4 M16.8 17 L15.2 15.4"/></g></svg>
<svg style="left:279px;top:57px;" width="17" height="16" viewBox="0 0 17 16"><path d="M1 8 L8 1.5 L8 5 L15.5 5 L15.5 11 L8 11 L8 14.5 Z" fill="#48b4e4" stroke="#102030" stroke-width="1.2" stroke-linejoin="round"/></svg>
<svg style="left:329px;top:57px;" width="17" height="16" viewBox="0 0 17 16"><path d="M16 8 L9 1.5 L9 5 L1.5 5 L1.5 11 L9 11 L9 14.5 Z" fill="#48b4e4" stroke="#102030" stroke-width="1.2" stroke-linejoin="round"/></svg>
<svg style="left:303px;top:56px;" width="19" height="19" viewBox="0 0 19 19"><circle cx="9.5" cy="9" r="4.3" fill="#ffee00" stroke="#000" stroke-width="1.2"/><g stroke="#000" stroke-width="1.1" shape-rendering="crispEdges"><path d="M9.5 1 V3.6 M9.5 14.4 V17 M1 9 H3.8 M15.2 9 H18 M3 2.5 L5.2 4.7 M16 2.5 L13.8 4.7 M3 15.5 L5.2 13.3 M16 15.5 L13.8 13.3"/></g></svg>
<div class="t" style="left:374px;top:57px;font-size:12.5px">Find:</div>
<div class="a" style="left:405px;top:54px;width:115px;height:20px;background:#fff;border:1px solid #8a887c;border-right-color:#fff;border-bottom-color:#fff"></div>
<svg style="left:520px;top:57px;" width="10" height="6" viewBox="0 0 10 6"><path d="M1 1 L8 1 L4.5 5 Z" fill="#000"/></svg>
<svg style="left:534px;top:59px;" width="22" height="11" viewBox="0 0 22 11"><g shape-rendering="crispEdges"><rect x="5" y="0" width="1" height="1" fill="#a8d4f0"/><rect x="15" y="0" width="1" height="1" fill="#1e3a5a"/><rect x="4" y="1" width="1" height="1" fill="#a8d4f0"/><rect x="5" y="1" width="1" height="1" fill="#1e3a5a"/><rect x="15" y="1" width="1" height="1" fill="#a8d4f0"/><rect x="16" y="1" width="1" height="1" fill="#1e3a5a"/><rect x="4" y="2" width="1" height="1" fill="#1e3a5a"/><rect x="5" y="2" width="1" height="1" fill="#a8d4f0"/><rect x="15" y="2" width="1" height="1" fill="#1e3a5a"/><rect x="16" y="2" width="1" height="1" fill="#a8d4f0"/><rect x="2" y="3" width="1" height="1" fill="#a8d4f0"/><rect x="3" y="3" width="1" height="1" fill="#1e3a5a"/><rect x="4" y="3" width="1" height="1" fill="#a8d4f0"/><rect x="5" y="3" width="1" height="1" fill="#1e3a5a"/><rect x="15" y="3" width="1" height="1" fill="#a8d4f0"/><rect x="16" y="3" width="1" height="1" fill="#1e3a5a"/><rect x="17" y="3" width="1" height="1" fill="#a8d4f0"/><rect x="18" y="3" width="1" height="1" fill="#1e3a5a"/><rect x="2" y="4" width="1" height="1" fill="#1e3a5a"/><rect x="3" y="4" width="1" height="1" fill="#a8d4f0"/><rect x="4" y="4" width="1" height="1" fill="#1e3a5a"/><rect x="5" y="4" width="1" height="1" fill="#a8d4f0"/><rect x="15" y="4" width="1" height="1" fill="#1e3a5a"/><rect x="16" y="4" width="1" height="1" fill="#a8d4f0"/><rect x="17" y="4" width="1" height="1" fill="#1e3a5a"/><rect x="18" y="4" width="1" height="1" fill="#a8d4f0"/><rect x="0" y="5" width="1" height="1" fill="#a8d4f0"/><rect x="1" y="5" width="1" height="1" fill="#1e3a5a"/><rect x="2" y="5" width="1" height="1" fill="#a8d4f0"/><rect x="3" y="5" width="1" height="1" fill="#1e3a5a"/><rect x="4" y="5" width="1" height="1" fill="#a8d4f0"/><rect x="5" y="5" width="1" height="1" fill="#1e3a5a"/><rect x="15" y="5" width="1" height="1" fill="#a8d4f0"/><rect x="16" y="5" width="1" height="1" fill="#1e3a5a"/><rect x="17" y="5" width="1" height="1" fill="#a8d4f0"/><rect x="18" y="5" width="1" height="1" fill="#1e3a5a"/><rect x="19" y="5" width="1" height="1" fill="#a8d4f0"/><rect x="20" y="5" width="1" height="1" fill="#1e3a5a"/><rect x="2" y="6" width="1" height="1" fill="#1e3a5a"/><rect x="3" y="6" width="1" height="1" fill="#a8d4f0"/><rect x="4" y="6" width="1" height="1" fill="#1e3a5a"/><rect x="5" y="6" width="1" height="1" fill="#a8d4f0"/><rect x="15" y="6" width="1" height="1" fill="#1e3a5a"/><rect x="16" y="6" width="1" height="1" fill="#a8d4f0"/><rect x="17" y="6" width="1" height="1" fill="#1e3a5a"/><rect x="18" y="6" width="1" height="1" fill="#a8d4f0"/><rect x="2" y="7" width="1" height="1" fill="#a8d4f0"/><rect x="3" y="7" width="1" height="1" fill="#1e3a5a"/><rect x="4" y="7" width="1" height="1" fill="#a8d4f0"/><rect x="5" y="7" width="1" height="1" fill="#1e3a5a"/><rect x="15" y="7" width="1" height="1" fill="#a8d4f0"/><rect x="16" y="7" width="1" height="1" fill="#1e3a5a"/><rect x="17" y="7" width="1" height="1" fill="#a8d4f0"/><rect x="18" y="7" width="1" height="1" fill="#1e3a5a"/><rect x="4" y="8" width="1" height="1" fill="#1e3a5a"/><rect x="5" y="8" width="1" height="1" fill="#a8d4f0"/><rect x="15" y="8" width="1" height="1" fill="#1e3a5a"/><rect x="16" y="8" width="1" height="1" fill="#a8d4f0"/><rect x="4" y="9" width="1" height="1" fill="#a8d4f0"/><rect x="5" y="9" width="1" height="1" fill="#1e3a5a"/><rect x="15" y="9" width="1" height="1" fill="#a8d4f0"/><rect x="16" y="9" width="1" height="1" fill="#1e3a5a"/><rect x="5" y="10" width="1" height="1" fill="#a8d4f0"/><rect x="15" y="10" width="1" height="1" fill="#1e3a5a"/></g></svg>
<svg style="left:7px;top:91px;" width="19" height="18" viewBox="0 0 19 18"><path d="M1 9.5 Q4 8 9 9.5 Q14 11 18 9" fill="none" stroke="#5a5a5a" stroke-width="1.5"/><path d="M9.5 1 Q8 5 9 9.5 Q10 14 8.5 17.5" fill="none" stroke="#5a5a5a" stroke-width="1.5"/><path d="M4 6 L14 13 M14 5 L5 13" stroke="#bbb" stroke-width="0.8" opacity="0.6"/></svg>
<svg style="left:154px;top:92px;" width="22" height="12" viewBox="0 0 22 12"><rect x="1.5" y="4.5" width="4.5" height="4.5" fill="none" stroke="#000" stroke-width="1.2"/><path d="M4.5 6 L8.5 2 M5.5 1.5 H8.5 V4.5" fill="none" stroke="#000" stroke-width="1.3"/><path d="M12.5 1.5 L19 8.5 M19 1.5 L12.5 8.5" stroke="#000" stroke-width="2.2"/></svg>
<svg style="left:19px;top:145px;" width="18" height="17" viewBox="0 0 18 17"><rect x="0" y="0" width="10" height="10" fill="#fff" opacity="0.6"/><path d="M0.5 4.5 H9.5 M3.5 1 V8.5 M3.5 1 L7.5 4.5 L3.5 8.5 M7.5 1 V8.5" fill="none" stroke="#000" stroke-width="1"/><path d="M6 12 L8.5 14.5 L15.5 6.5" fill="none" stroke="#2a7a2a" stroke-width="3" stroke-linejoin="round" stroke-linecap="round"/><path d="M6 12 L8.5 14.5 L15.5 6.5" fill="none" stroke="#66d066" stroke-width="1.6" stroke-linejoin="round" stroke-linecap="round"/></svg>
<svg style="left:20px;top:166px;" width="16" height="16" viewBox="0 0 16 16"><circle cx="8" cy="8" r="7.5" fill="#3cb82a"/><circle cx="8" cy="7.5" r="6" fill="#58d040"/><path d="M5.5 3.5 V6.5 M10.5 3.5 V6.5" stroke="#1a4a10" stroke-width="1.2"/><path d="M3 8.5 Q8 14 13 8.5" fill="none" stroke="#1a4a10" stroke-width="1.3"/></svg>
<svg style="left:19px;top:208px;" width="14" height="12" viewBox="0 0 14 12"><path d="M2 7 L4.8 10 L12 2" fill="none" stroke="#3a8a3a" stroke-width="3" stroke-linejoin="round" stroke-linecap="round"/><path d="M2 7 L4.8 10 L12 2" fill="none" stroke="#86da86" stroke-width="1.3" stroke-linejoin="round" stroke-linecap="round"/></svg>
<svg style="left:21px;top:226px;" width="12" height="12" viewBox="0 0 12 12"><path d="M1.8 1.8 L10.2 10.2 M10.2 1.8 L1.8 10.2" stroke="#a82436" stroke-width="3.4" stroke-linecap="round"/><path d="M2 2 L10 10 M10 2 L2 10" stroke="#e8344a" stroke-width="1.6" stroke-linecap="round"/></svg>
<svg style="left:19px;top:245px;" width="15" height="15" viewBox="0 0 15 15"><rect x="3.5" y="0.5" width="10" height="14" fill="#fcfcff" stroke="#9898a0"/><path d="M11 0.5 L13.5 0.5 L13.5 3" fill="#fff" stroke="#c0c0c8" stroke-width="0.8"/><g fill="#222"><rect x="1" y="1.5" width="3" height="1"/><rect x="1" y="3.3" width="3" height="1"/><rect x="1" y="5.1" width="3" height="1"/><rect x="1" y="6.9" width="3" height="1"/><rect x="1" y="8.7" width="3" height="1"/><rect x="1" y="10.5" width="3" height="1"/><rect x="1" y="12.3" width="3" height="1"/></g></svg>
<svg style="left:19px;top:265px;" width="15" height="15" viewBox="0 0 15 15"><rect x="3.5" y="0.5" width="10" height="14" fill="#fcfcff" stroke="#9898a0"/><path d="M11 0.5 L13.5 0.5 L13.5 3" fill="#fff" stroke="#c0c0c8" stroke-width="0.8"/><g fill="#222"><rect x="1" y="1.5" width="3" height="1"/><rect x="1" y="3.3" width="3" height="1"/><rect x="1" y="5.1" width="3" height="1"/><rect x="1" y="6.9" width="3" height="1"/><rect x="1" y="8.7" width="3" height="1"/><rect x="1" y="10.5" width="3" height="1"/><rect x="1" y="12.3" width="3" height="1"/></g></svg>
<svg style="left:20px;top:306px;" width="15" height="15" viewBox="0 0 15 15"><rect x="3.5" y="0.5" width="10" height="14" fill="#fcfcff" stroke="#9898a0"/><path d="M11 0.5 L13.5 0.5 L13.5 3" fill="#fff" stroke="#c0c0c8" stroke-width="0.8"/><text x="8.5" y="10.5" font-family="Liberation Sans" font-weight="bold" font-size="7.5" fill="#3c5a9c" text-anchor="middle">R</text></svg>
<svg style="left:19px;top:327px;" width="15" height="15" viewBox="0 0 15 15"><rect x="3.5" y="0.5" width="10" height="14" fill="#fcfcff" stroke="#9898a0"/><path d="M11 0.5 L13.5 0.5 L13.5 3" fill="#fff" stroke="#c0c0c8" stroke-width="0.8"/><g fill="#222"><rect x="1" y="1.5" width="3" height="1"/><rect x="1" y="3.3" width="3" height="1"/><rect x="1" y="5.1" width="3" height="1"/><rect x="1" y="6.9" width="3" height="1"/><rect x="1" y="8.7" width="3" height="1"/><rect x="1" y="10.5" width="3" height="1"/><rect x="1" y="12.3" width="3" height="1"/></g><text x="8.5" y="10.5" font-family="Liberation Sans" font-weight="bold" font-size="7.5" fill="#3c5a9c" text-anchor="middle">E</text></svg>
<svg style="left:19px;top:347px;" width="15" height="15" viewBox="0 0 15 15"><rect x="3.5" y="0.5" width="10" height="14" fill="#fcfcff" stroke="#9898a0"/><path d="M11 0.5 L13.5 0.5 L13.5 3" fill="#fff" stroke="#c0c0c8" stroke-width="0.8"/><g fill="#222"><rect x="1" y="1.5" width="3" height="1"/><rect x="1" y="3.3" width="3" height="1"/><rect x="1" y="5.1" width="3" height="1"/><rect x="1" y="6.9" width="3" height="1"/><rect x="1" y="8.7" width="3" height="1"/><rect x="1" y="10.5" width="3" height="1"/><rect x="1" y="12.3" width="3" height="1"/></g><text x="8.5" y="10.5" font-family="Liberation Sans" font-weight="bold" font-size="7.5" fill="#3c5a9c" text-anchor="middle">L</text></svg>
<svg style="left:21px;top:389px;" width="14" height="14" viewBox="0 0 14 14"><circle cx="7" cy="7" r="6.5" fill="#1e4cc0" stroke="#10308a" stroke-width="0.8"/><ellipse cx="6" cy="5" rx="4" ry="3" fill="#6a90e8" opacity="0.5"/><circle cx="8" cy="3.5" r="1.1" fill="#fff"/><path d="M7.5 6 L6 11.5" stroke="#fff" stroke-width="1.8"/></svg>
<svg style="left:19px;top:409px;" width="17" height="14" viewBox="0 0 17 14"><g fill="#1a3a9a"><rect x="1" y="6" width="6" height="7.5"/><rect x="10" y="6" width="6" height="7.5"/><rect x="2.5" y="1.5" width="3.5" height="5"/><rect x="11" y="1.5" width="3.5" height="5"/><rect x="6.5" y="5" width="4" height="3"/></g><rect x="3" y="9" width="2" height="3" fill="#9ab0e8"/><rect x="12" y="9" width="2" height="3" fill="#9ab0e8"/></svg>
<svg style="left:19px;top:430px;" width="18" height="12" viewBox="0 0 18 12"><path d="M6 1 H10 Q14.5 1 14.5 6 Q14.5 11 10 11 H6 Z" fill="#78a8e8" stroke="#000" stroke-width="1.3"/><path d="M1 3.5 H6 M1 8.5 H6 M14.5 6 H17.5" stroke="#000" stroke-width="1.5"/></svg>
<svg style="left:21px;top:471px;" width="15" height="15" viewBox="0 0 15 15"><polygon points="15.00,7.50 13.15,9.01 14.00,11.25 11.64,11.64 11.25,14.00 9.01,13.15 7.50,15.00 5.99,13.15 3.75,14.00 3.36,11.64 1.00,11.25 1.85,9.01 0.00,7.50 1.85,5.99 1.00,3.75 3.36,3.36 3.75,1.00 5.99,1.85 7.50,0.00 9.01,1.85 11.25,1.00 11.64,3.36 14.00,3.75 13.15,5.99" fill="#7ea2c8" stroke="#5a7ea6" stroke-width="0.6"/><circle cx="7.5" cy="7.5" r="4.050000000000001" fill="none" stroke="#9cc0e8" stroke-width="1.7999999999999998"/><circle cx="7.5" cy="7.5" r="1.5" fill="#e8f0fa"/></svg>
<div class="t" style="left:168px;top:208px;color:#888;font-size:12.5px">F</div>
<div class="t" style="left:168px;top:305px;color:#888;font-size:12.5px">_</div>
<div class="t" style="left:168px;top:327px;color:#888;font-size:12.5px">F</div>
<div class="t" style="left:168px;top:347px;color:#888;font-size:12.5px">F</div>
<div class="a" style="left:187px;top:90px;width:139px;height:24px;border-top:1px solid #fff;border-bottom:1px solid #fff;background:#ebe8dc"></div>
<div class="a" style="left:327px;top:88px;width:231px;height:26px;background:#ebe9dc"></div>
<svg style="left:325px;top:86px;" width="236" height="28" viewBox="0 0 236 28"><path d="M2.5 27 V4.5 Q2.5 3 4 3 H229" fill="none" stroke="#fff"/><path d="M228.5 2 Q232.5 3 232.5 6 V27" fill="none" stroke="#000" stroke-width="1.2"/></svg>
<div class="a" style="left:558px;top:113px;width:867px;height:1px;background:#fff"></div>
<svg style="left:192px;top:94px;" width="16" height="16" viewBox="0 0 16 16"><circle cx="8" cy="8" r="7.5" fill="#7a7a7a"/><circle cx="8" cy="7.5" r="6.2" fill="#9a9a9a"/><path d="M5.5 4 V6.5 M10.5 4 V6.5" stroke="#444" stroke-width="1.1"/><path d="M3.5 9 Q8 13.5 12.5 9" fill="none" stroke="#444" stroke-width="1.2"/></svg>
<svg style="left:333px;top:94px;" width="12" height="12" viewBox="0 0 12 12"><path d="M1.8 1.8 L10.2 10.2 M10.2 1.8 L1.8 10.2" stroke="#a82436" stroke-width="3.4" stroke-linecap="round"/><path d="M2 2 L10 10 M10 2 L2 10" stroke="#e8344a" stroke-width="1.6" stroke-linecap="round"/></svg>
<div class="t" style="left:211px;top:95px;font-size:12.5px">Comparison Results</div>
<div class="t" style="left:349px;top:93px;font-size:12.5px">ERC Pathchk Polygons Database</div>
<svg style="left:542px;top:95px;" width="10" height="9" viewBox="0 0 10 9"><path d="M1.5 1.5 L8 8 M8 1.5 L1.5 8" stroke="#000" stroke-width="2"/></svg>
<svg style="left:488px;top:122px;" width="26" height="17" viewBox="0 0 26 17"><g fill="none" stroke="#000" stroke-width="1.4"><rect x="1.7" y="2.7" width="4" height="4"/><rect x="9.7" y="2.7" width="4" height="4"/><rect x="1.7" y="10.7" width="4" height="4"/><rect x="9.7" y="10.7" width="4" height="4"/></g><path d="M17 2 L24 2 L20.5 6 Z" fill="#000"/></svg>
<svg style="left:523px;top:122px;" width="15" height="17" viewBox="0 0 15 17"><path d="M1 2 Q7 0.5 14 2 L9 8 L8 15.5 L6 13 L5.5 8 Z" fill="#a8a8a8" stroke="#808080" stroke-width="0.8"/><path d="M3 2.5 Q7 4 11 2.5 L8 7 L7.5 13 L6.5 8 Z" fill="#e0e0e0"/></svg>
<svg style="left:197px;top:148px;" width="13" height="13" viewBox="0 0 13 13"><rect x="1.5" y="1.5" width="8.5" height="8.5" fill="#fff" stroke="#3a3a3a" stroke-width="1.1"/><path d="M3 3.5 H6 M3 5.5 H5 " stroke="#2a2a8a" stroke-width="1"/><rect x="7" y="3" width="1" height="1" fill="#2a2a8a"/><rect x="4.5" y="7" width="1.2" height="1.2" fill="#2a2a8a"/><path d="M6.5 6.5 H11.5 M8.5 6.5 V12" stroke="#8a8a8a" stroke-width="1.8"/><path d="M7 6.5 H11 M8.5 7 V11.5" stroke="#eee" stroke-width="0.7"/></svg>
<svg style="left:212px;top:165px;" width="14" height="12" viewBox="0 0 14 12"><path d="M2 7 L4.8 10 L12 2" fill="none" stroke="#3a8a3a" stroke-width="3" stroke-linejoin="round" stroke-linecap="round"/><path d="M2 7 L4.8 10 L12 2" fill="none" stroke="#86da86" stroke-width="1.3" stroke-linejoin="round" stroke-linecap="round"/></svg>
<svg style="left:212px;top:183px;" width="14" height="12" viewBox="0 0 14 12"><path d="M2 7 L4.8 10 L12 2" fill="none" stroke="#3a8a3a" stroke-width="3" stroke-linejoin="round" stroke-linecap="round"/><path d="M2 7 L4.8 10 L12 2" fill="none" stroke="#86da86" stroke-width="1.3" stroke-linejoin="round" stroke-linecap="round"/></svg>
<svg style="left:212px;top:201px;" width="14" height="12" viewBox="0 0 14 12"><path d="M2 7 L4.8 10 L12 2" fill="none" stroke="#3a8a3a" stroke-width="3" stroke-linejoin="round" stroke-linecap="round"/><path d="M2 7 L4.8 10 L12 2" fill="none" stroke="#86da86" stroke-width="1.3" stroke-linejoin="round" stroke-linecap="round"/></svg>
<svg style="left:196px;top:220px;" width="11" height="11" viewBox="0 0 11 11"><rect x="1.5" y="1.5" width="8" height="8" fill="#fff" stroke="#000" stroke-width="1.2"/><path d="M3.5 5.5 H7.5" stroke="#000" stroke-width="1.4"/></svg>
<svg style="left:214px;top:219px;" width="12" height="12" viewBox="0 0 12 12"><path d="M1.8 1.8 L10.2 10.2 M10.2 1.8 L1.8 10.2" stroke="#a82436" stroke-width="3.4" stroke-linecap="round"/><path d="M2 2 L10 10 M10 2 L2 10" stroke="#e8344a" stroke-width="1.6" stroke-linecap="round"/></svg>
<div class="a" style="left:220px;top:235px;width:1px;height:8px;background:#a0a0a0"></div>
<div class="a" style="left:220px;top:243px;width:10px;height:1px;background:#a0a0a0"></div>
<svg style="left:232px;top:237px;" width="12" height="12" viewBox="0 0 12 12"><path d="M1.8 1.8 L10.2 10.2 M10.2 1.8 L1.8 10.2" stroke="#a82436" stroke-width="3.4" stroke-linecap="round"/><path d="M2 2 L10 10 M10 2 L2 10" stroke="#e8344a" stroke-width="1.6" stroke-linecap="round"/></svg>
<div class="a" style="left:632px;top:146px;width:13px;height:620px;background:#ebe9dc"></div>
<svg style="left:633px;top:161px;" width="11" height="11" viewBox="0 0 11 11"><rect x="0" y="0" width="11" height="11" fill="#d8d8d8"/><path d="M5.5 1.5 L10 9.5 L1 9.5 Z" fill="#f4f4f4" stroke="#a0a0a0" stroke-width="0.8"/><rect x="0" y="10" width="11" height="1" fill="#808080"/></svg>
<div class="a" style="left:633px;top:172px;width:11px;height:582px;background:#ebe8dc;border-left:1px solid #fff;border-right:1px solid #8a887c;border-bottom:1px solid #77756a"></div>
<svg style="left:633px;top:754px;" width="11" height="12" viewBox="0 0 11 12"><rect x="0" y="0" width="11" height="12" fill="#d8d8d8"/><path d="M5.5 10.5 L10 2 L1 2 Z" fill="#f4f4f4" stroke="#a0a0a0" stroke-width="0.8"/></svg>
<div class="a" style="left:1418px;top:146px;width:7px;height:434px;background:#cdcdcd;border-left:1px solid #e8e8e8"></div>
<svg style="left:1418px;top:147px;" width="7" height="11" viewBox="0 0 7 11"><rect x="0" y="0" width="7" height="11" fill="#d8d8d8"/><path d="M5.5 1.5 L10 9.5 L1 9.5 Z" fill="#f4f4f4" stroke="#a0a0a0" stroke-width="0.8"/><rect x="0" y="10" width="7" height="1" fill="#707070"/></svg>
<div class="a" style="left:1418px;top:158px;width:7px;height:230px;background:#ebe8dc;border-left:1px solid #fff;border-bottom:1px solid #77756a"></div>
<svg style="left:1418px;top:568px;" width="7" height="12" viewBox="0 0 7 12"><rect x="0" y="0" width="7" height="12" fill="#d8d8d8"/><path d="M5.5 10.5 L10 2 L1 2 Z" fill="#f4f4f4" stroke="#a0a0a0" stroke-width="0.8"/></svg>
<div class="a" style="left:1416px;top:586px;width:9px;height:179px;background:#ebe9dc"></div>
<svg style="left:1416px;top:588px;" width="9" height="14" viewBox="0 0 9 14"><path d="M3 3.5 L9 9.5 M9 3.5 L3 9.5" stroke="#000" stroke-width="2"/></svg>
<div class="a" style="left:1416px;top:602px;width:9px;height:1px;background:#8a887c"></div>
<svg style="left:1416px;top:603px;" width="9" height="11" viewBox="0 0 9 11"><rect x="1" y="0" width="8" height="11" fill="#d8d8d8"/><path d="M6 1.5 L10 9.5 L2 9.5 Z" fill="#f4f4f4" stroke="#a0a0a0" stroke-width="0.8"/><rect x="1" y="10" width="8" height="1" fill="#707070"/></svg>
<svg style="left:1416px;top:754px;" width="9" height="11" viewBox="0 0 9 11"><rect x="1" y="0" width="8" height="11" fill="#d8d8d8"/><path d="M6 10.5 L10 2 L2 2 Z" fill="#f4f4f4" stroke="#a0a0a0" stroke-width="0.8"/></svg>
<div class="a" style="left:1416px;top:772px;width:9px;height:47px;background:#ebe9dc"></div>
<svg style="left:1416px;top:774px;" width="9" height="12" viewBox="0 0 9 12"><path d="M3 3.5 L9 9.5 M9 3.5 L3 9.5" stroke="#000" stroke-width="2"/></svg>
<div class="a" style="left:1416px;top:788px;width:9px;height:1px;background:#8a887c"></div>
<svg style="left:1416px;top:789px;" width="9" height="11" viewBox="0 0 9 11"><rect x="1" y="0" width="8" height="11" fill="#d8d8d8"/><path d="M6 1.5 L10 9.5 L2 9.5 Z" fill="#f4f4f4" stroke="#a0a0a0" stroke-width="0.8"/><rect x="1" y="10" width="8" height="1" fill="#707070"/></svg>
<div class="t" style="left:1341px;top:801px;font-weight:bold;font-size:17px;line-height:20px;color:#3a2a58;-webkit-text-stroke:1px #1a0a28;letter-spacing:1.1px;transform:scaleX(0.72);transform-origin:0 0;z-index:5">bbs.eetop.cn</div>
</body></html>
